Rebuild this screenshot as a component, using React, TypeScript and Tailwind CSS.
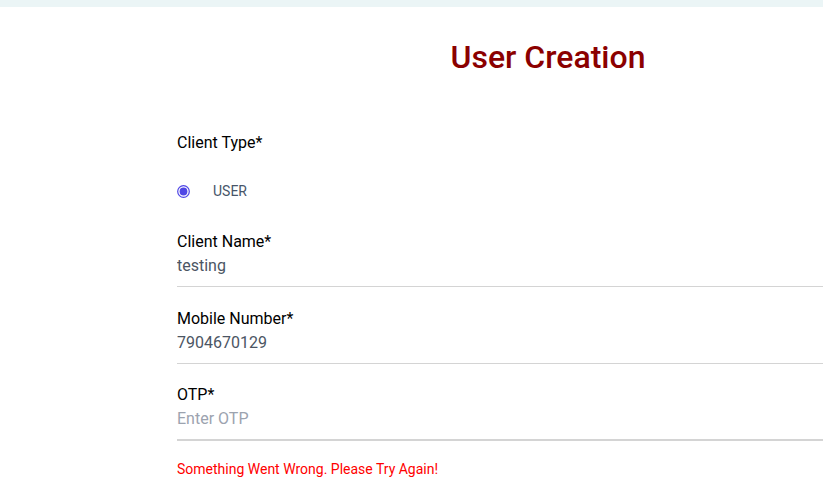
import { useState } from "react";

const font = { fontFamily: "Roboto, 'Liberation Sans', sans-serif" };

function Field({
  label,
  value,
  placeholder,
  thick,
  className = "",
}: {
  label: string;
  value?: string;
  placeholder?: string;
  thick?: boolean;
  className?: string;
}) {
  return (
    <div className={className}>
      <label className="block text-base leading-6 text-black">{label}</label>
      <input
        readOnly
        value={value ?? ""}
        placeholder={placeholder}
        className={
          "block w-full h-6 box-content pb-[8px] bg-transparent outline-none text-base leading-6 text-[#4b5563] placeholder:text-[#9ca3af] " +
          (thick ? "border-b-2 border-[#d4d4d4]" : "border-b border-[#d4d4d4]")
        }
      />
    </div>
  );
}

export default function App() {
  const [clientType] = useState("USER");

  return (
    <div className="min-h-screen w-full overflow-hidden bg-white" style={font}>
      <div className="h-[7px] bg-[#ebf5f6]" />

      <div className="pl-[177px]">
        <form className="w-[742px]" onSubmit={(e) => e.preventDefault()}>
          <h1 className="mt-[32px] text-center text-[32px] leading-9 font-medium text-[#8b0000]">
            User Creation
          </h1>

          {/* Client type */}
          <div className="mt-[56px] text-base leading-6 text-black">Client Type*</div>
          <div className="mt-[24px] flex items-center h-6">
            <svg width="13" height="13" viewBox="0 0 13 13" aria-hidden="true">
              <circle cx="6.5" cy="6.5" r="5.8" fill="none" stroke="#4f46e5" strokeWidth="1.2" />
              <circle cx="6.5" cy="6.5" r="3.9" fill="#4f46e5" />
            </svg>
            <span className="ml-[23px] text-sm text-[#475569]">{clientType}</span>
          </div>

          <Field className="mt-[27px]" label="Client Name*" value="testing" />
          <Field className="mt-[20px]" label="Mobile Number*" value="7904670129" />
          <Field className="mt-[19px]" label="OTP*" placeholder="Enter OTP" thick />

          <p className="mt-[18px] text-sm leading-5 text-[#ff0000]">
            Something Went Wrong. Please Try Again!
          </p>
        </form>
      </div>
    </div>
  );
}
